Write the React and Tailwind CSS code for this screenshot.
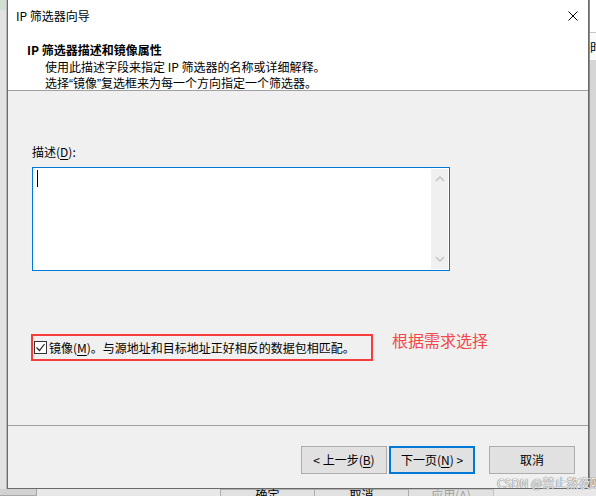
const ui = "font-['Microsoft_YaHei','Noto_Sans_CJK_SC',sans-serif]"

function Btn({ children, primary }) {
  return (
    <div
      className={`w-[86px] h-[28px] flex items-center justify-center bg-[#e1e1e1] text-[12px] leading-none ${
        primary ? 'border-2 border-[#0078d7]' : 'border border-[#adadad]'
      }`}
    >
      {children}
    </div>
  )
}

function Chevron({ down }) {
  return (
    <svg width="10" height="6" viewBox="0 0 10 6" className="block">
      <path
        d={down ? 'M1 1l4 4 4-4' : 'M1 5l4-4 4 4'}
        fill="none"
        stroke="#c4c4c4"
        strokeWidth="1.6"
      />
    </svg>
  )
}

// half-width quote marks, as the system font draws them
const Q = ({ children }) => <span className="font-['Liberation_Sans',sans-serif]">{children}</span>

export default function App() {
  return (
    <div className={`relative w-[596px] h-[496px] overflow-hidden bg-[#d9d9d9] text-[12px] text-black ${ui}`}>
      <div className="flex h-[489px]">
        {/* desktop edge left */}
        <div className="w-[7px] flex flex-col border-r border-[#b9b9b9]">
          <div className="h-[10px] bg-[#d3ded3]" />
          <div className="flex-1 bg-[#e2e2e2]" />
        </div>

        {/* dialog */}
        <div className="w-[582px] flex flex-col border-x border-b border-[#6a6a6a] bg-[#f0f0f0]">
          <div className="h-[91px] bg-white border-b border-[#a0a0a0]">
            <div className="h-[31px] flex items-center justify-between pl-[8px] pr-[10px]">
              <span className="leading-[16px]">IP 筛选器向导</span>
              <svg width="10" height="10" viewBox="0 0 10 10" className="block">
                <path d="M0.5 0.5l9 9M9.5 0.5l-9 9" stroke="#000" strokeWidth="1" />
              </svg>
            </div>
            <div className="pt-[10px] pl-[19px]">
              <div className="font-bold leading-[17px]">IP 筛选器描述和镜像属性</div>
              <div className="pl-[18px] leading-[16px] pt-[1px]">
                <div>使用此描述字段来指定 IP 筛选器的名称或详细解释。</div>
                <div>
                  选择<Q>“</Q>镜像<Q>”</Q>复选框来为每一个方向指定一个筛选器。
                </div>
              </div>
            </div>
          </div>

          <div className="flex-1 pt-[52px] pl-[24px]">
            <div className="leading-[17px]">
              描述(<span className="underline underline-offset-2">D</span>):
            </div>
            <div className="mt-[7px] w-[418px] h-[104px] border border-[#0078d7] bg-white flex">
              <div className="flex-1 pl-[4px] pt-[2px]">
                <div className="w-px h-[17px] bg-black" />
              </div>
              <div className="w-[17px] my-px mr-px bg-[#f0f0f0] flex flex-col items-center justify-between py-[7px]">
                <Chevron />
                <Chevron down />
              </div>
            </div>

            <div className="mt-[63px] flex items-start">
              <div className="ml-[-1px] w-[342px] h-[27px] border-2 border-[#f53b3b] flex items-center pl-px">
                <div className="w-[13px] h-[13px] border border-[#333] bg-white flex items-center justify-center">
                  <svg width="11" height="11" viewBox="0 0 11 11" className="block">
                    <path d="M1.5 5.5l3 3 5-6.5" fill="none" stroke="#222" strokeWidth="1.2" />
                  </svg>
                </div>
                <span className="ml-[2px] leading-[16px]">
                  镜像(<span className="underline underline-offset-2">M</span>)。与源地址和目标地址正好相反的数据包相匹配。
                </span>
              </div>
              <div className="ml-[19px] mt-[-5px] text-[16px] leading-[22px] text-[#f04848]">根据需求选择</div>
            </div>
          </div>

          <div className="h-[63px] border-t border-[#a0a0a0] pt-[20px] pr-[13px] flex justify-end items-start">
            <Btn>
              &lt; 上一步(<span className="underline underline-offset-2">B</span>)
            </Btn>
            <div className="ml-[2px]">
              <Btn primary>
                下一页(<span className="underline underline-offset-2">N</span>) &gt;
              </Btn>
            </div>
            <div className="ml-[14px]">
              <Btn>取消</Btn>
            </div>
          </div>
        </div>

        {/* desktop edge right */}
        <div className="flex-1 flex flex-col overflow-hidden border-l border-[#8c8c8c]">
          <div className="h-[33px] bg-white border-b border-[#c6c6c6]" />
          <div className="h-[27px] bg-[#fafafa] overflow-hidden">
            <div className="text-[13px] leading-[27px] whitespace-nowrap">时</div>
          </div>
          <div className="flex-1 bg-[#d6d6d6]" />
        </div>
      </div>

      {/* window behind, bottom edge */}
      <div className="h-[7px] flex overflow-hidden">
        <div className="w-[37px] bg-[#d2d2d2] border-r border-b border-[#a8a8a8]" />
        <div className="w-[183px] bg-[#e8e8e8]" />
        <div className="w-[95px] bg-[#e1e1e1] border-x border-t border-[#adadad] flex justify-center">
          <span className="mt-[-3px] leading-[16px]">确定</span>
        </div>
        <div className="w-[94px] bg-[#e1e1e1] border-r border-t border-[#adadad] flex justify-center">
          <span className="mt-[-3px] leading-[16px]">取消</span>
        </div>
        <div className="w-[85px] bg-[#e1e1e1] border-r border-t border-[#c4c4c4] flex justify-center">
          <span className="mt-[-3px] leading-[16px] text-[#a0a0a0]">应用(A)</span>
        </div>
        <div className="flex-1 bg-[#e8e8e8]" />
      </div>

      <div className="absolute left-[497px] top-[475px] whitespace-nowrap text-[12px] leading-[16px] text-[#f2f2f2] [text-shadow:0_0_1px_#6e6e6e,0_0_1px_#6e6e6e]">
        CSDN @禁止熬夜呀
      </div>
    </div>
  )
}
